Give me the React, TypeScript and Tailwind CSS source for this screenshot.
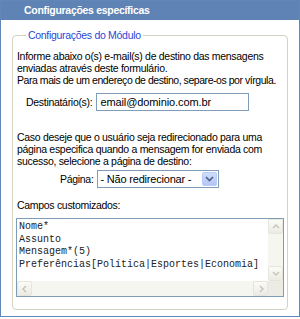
export default function App() {
  const font = "font-['Liberation_Sans',Arial,sans-serif] text-[10.5px] tracking-[-0.3px] leading-[12px]"

  return (
    <div className={`w-[300px] h-[317px] border border-[#6286b7] bg-white text-black ${font}`}>
      <div className="h-[19px] bg-[#5f83b4] pl-[23px] text-white font-bold leading-[19px]">
        Configurações específicas
      </div>

      <div className="px-[11px] pt-[9px]">
        <fieldset className="border border-[#d3d3c4] rounded-[4px] px-[3px] pb-[12px]">
          <legend className="ml-[10px] px-[2px] text-[#2848d4]">Configurações do Módulo</legend>

          <p className="mt-[9px] pl-[1px] whitespace-nowrap">
            Informe abaixo o(s) e-mail(s) de destino das mensagens
            <br />
            enviadas através deste formulário.
            <br />
            <span className="tracking-[-0.45px]">Para mais de um endereço de destino, separe-os por vírgula.</span>
          </p>

          <div className="mt-[7px] flex items-center pl-[10px]">
            <label className="mr-[4px]">Destinatário(s):</label>
            <div className="w-[153px] h-[18px] border border-[#7f9db9] pl-[3px] flex items-center text-[11px] tracking-[-0.1px]">
              email@dominio.com.br
            </div>
          </div>

          <p className="mt-[20px] pl-[1px] whitespace-nowrap">
            Caso deseje que o usuário seja redirecionado para uma
            <br />
            página especifica quando a mensagem for enviada com
            <br />
            sucesso, selecione a página de destino:
          </p>

          <div className="mt-[3px] flex items-center pl-[44px]">
            <label className="mr-[3px]">Página:</label>
            <div className="w-[122px] h-[18px] border border-[#7f9db9] flex items-center justify-between">
              <span className="pl-[3px] text-[11px] tracking-[-0.2px]">- Não redirecionar -</span>
              <span className="w-[15px] h-[14px] mr-[1px] rounded-[2px] border border-[#b9cbf3] bg-gradient-to-b from-[#cfdcfd] to-[#b3c6f6] flex items-center justify-center">
                <svg width="9" height="6" viewBox="0 0 9 6" fill="none">
                  <path d="M1 1 L4.5 4.5 L8 1" stroke="#4d6185" strokeWidth="1.6" />
                </svg>
              </span>
            </div>
          </div>

          <p className="mt-[11px] pl-[1px]">Campos customizados:</p>

          <div className="mt-[7px] w-[268px] h-[79px] border border-[#7f9db9] flex flex-col">
            <div className="flex flex-1 min-h-0">
              <div className="flex-1 overflow-hidden pl-[2px] pt-[2px] font-['Liberation_Mono','Courier_New',monospace] text-[10px] tracking-normal leading-[12.5px] text-[#222] whitespace-pre">
                {"Nome*\nAssunto\nMensagem*(5)\nPreferências[Política|Esportes|Economia]"}
              </div>
              <div className="w-[15px] bg-[#f6f6f1] flex flex-col justify-between">
                <ScrollBtn dir="up" />
                <ScrollBtn dir="down" />
              </div>
            </div>
            <div className="flex h-[15px]">
              <div className="flex-1 bg-[#f6f6f1] flex justify-between">
                <ScrollBtn dir="left" />
                <ScrollBtn dir="right" />
              </div>
              <div className="w-[15px] bg-[#ecebe4]" />
            </div>
          </div>
        </fieldset>
      </div>
    </div>
  )
}

function ScrollBtn({ dir }: { dir: "up" | "down" | "left" | "right" }) {
  const paths = {
    up: "M2 6 L5 3 L8 6",
    down: "M2 3 L5 6 L8 3",
    left: "M6 2 L3 5 L6 8",
    right: "M4 2 L7 5 L4 8",
  }
  return (
    <div className="w-[15px] h-[15px] border border-[#e6e5dc] rounded-[2px] bg-gradient-to-b from-[#fbfbf8] to-[#ecebe3] flex items-center justify-center">
      <svg width="10" height="10" viewBox="0 0 10 10" fill="none">
        <path d={paths[dir]} stroke="#c3c3b8" strokeWidth="1.4" />
      </svg>
    </div>
  )
}
